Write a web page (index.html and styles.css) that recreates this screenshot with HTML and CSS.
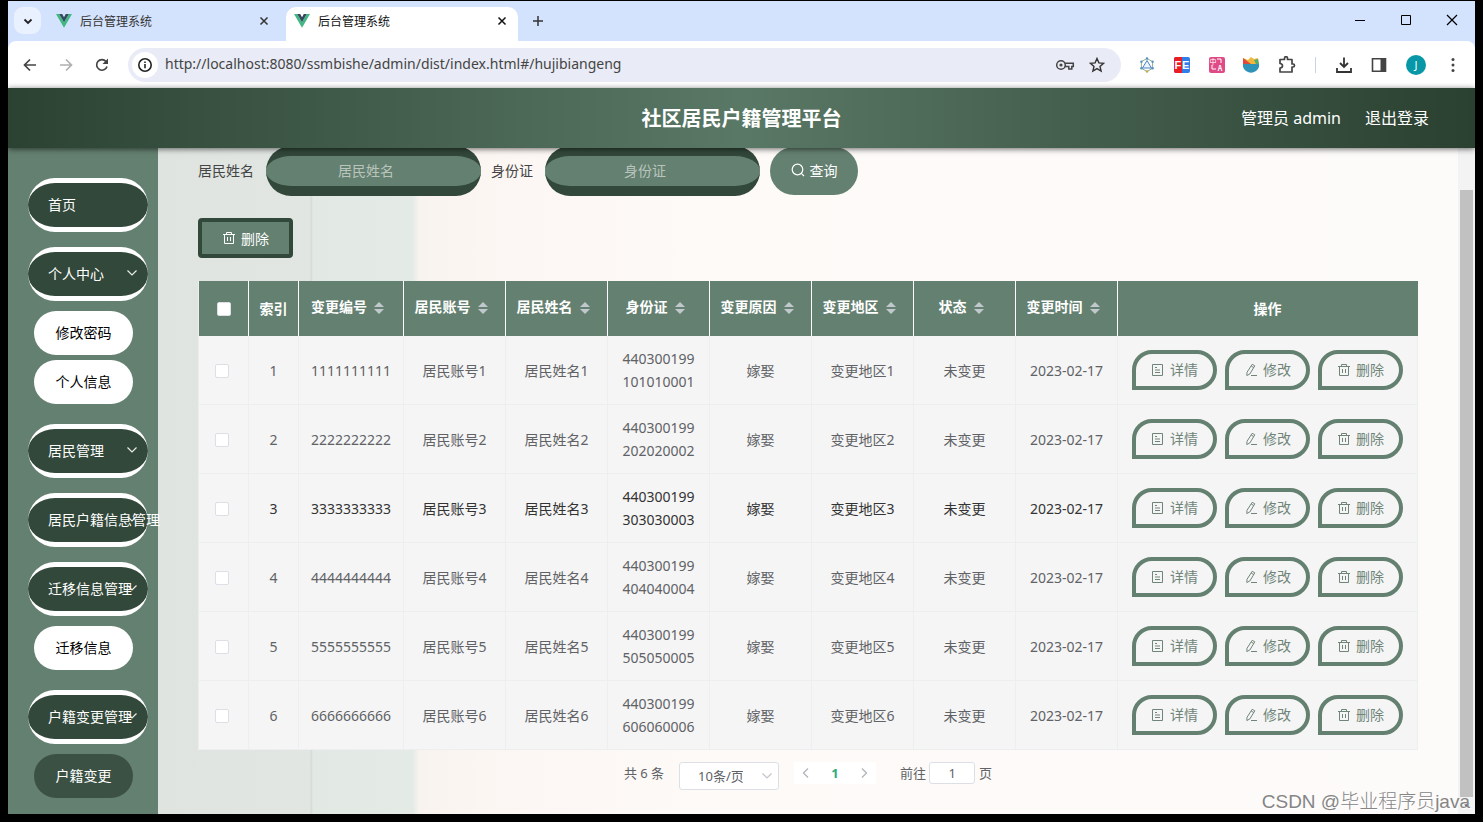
FILE: index.html
```html
<!DOCTYPE html>
<html lang="zh-CN">
<head>
<meta charset="utf-8">
<title>后台管理系统</title>
<link rel="stylesheet" href="styles.css">
</head>
<body>
<svg class="sprite" aria-hidden="true">
  <symbol id="vue" viewBox="0 0 16 14"><path fill="#41b883" d="M0 0h3.2L8 8.300 12.800 0H16L8 13.800z"/><path fill="#35495e" d="M3.200 0h3L8 3.200 9.800 0h3L8 8.300z"/></symbol>
  <symbol id="close" viewBox="0 0 10 10"><path d="M1.500 1.500l7 7M8.500 1.500l-7 7" fill="none" stroke="currentColor" stroke-width="1.500"/></symbol>
  <symbol id="down" viewBox="0 0 12 12"><path d="M1.500 3.500L6 8l4.500-4.500" fill="none" stroke="currentColor" stroke-width="1.200"/></symbol>
  <symbol id="trash" viewBox="0 0 14 14"><path d="M1 3.500h12M4.500 3.500V1.500h5v2M2.500 3.500v9h9v-9M5.500 6v4M8.500 6v4" fill="none" stroke="currentColor"/></symbol>
  <symbol id="doc" viewBox="0 0 14 14"><path d="M1.500 1.500h10v11h-10zM4 4.500h2M4 7h5M4 9.500h5" fill="none" stroke="currentColor"/></symbol>
  <symbol id="edit" viewBox="0 0 14 14"><path d="M8.200 1.300l2.600 1.500-5 8.200-3 1.500.2-3.200zM7.200 3l2.600 1.600M7 12.500h6" fill="none" stroke="currentColor"/></symbol>
</svg>

<div class="window">
  <div class="tabstrip">
    <button class="tab-search" aria-label="搜索标签页"><svg width="12" height="12" viewBox="0 0 12 12"><path d="M2.500 4.500L6 8l3.500-3.500" fill="none" stroke="#222" stroke-width="1.800"/></svg></button>
    <div class="tab"><svg width="16" height="14"><use href="#vue"/></svg><span>后台管理系统</span><button aria-label="关闭"><svg width="10" height="10"><use href="#close"/></svg></button></div>
    <div class="tab active"><svg width="16" height="14"><use href="#vue"/></svg><span>后台管理系统</span><button aria-label="关闭"><svg width="10" height="10"><use href="#close"/></svg></button></div>
    <button class="new-tab" aria-label="新标签页"><svg width="12" height="12" viewBox="0 0 12 12"><path d="M6 1v10M1 6h10" stroke="#333" stroke-width="1.500"/></svg></button>
    <div class="win-controls">
      <button aria-label="最小化"><svg width="12" height="12" viewBox="0 0 12 12"><path d="M1 6.500h10" stroke="#000"/></svg></button>
      <button aria-label="最大化"><svg width="12" height="12" viewBox="0 0 12 12"><path d="M1.500 1.500h9v9h-9z" fill="none" stroke="#000"/></svg></button>
      <button aria-label="关闭窗口"><svg width="12" height="12" viewBox="0 0 12 12"><path d="M1 1l10 10M11 1L1 11" stroke="#000" stroke-width="1.200"/></svg></button>
    </div>
  </div>

  <div class="toolbar">
    <div class="nav-buttons">
      <button aria-label="后退"><svg width="16" height="16" viewBox="0 0 16 16"><path d="M14 8H3M8 2.500L2.500 8 8 13.500" fill="none" stroke="#444" stroke-width="1.700"/></svg></button>
      <button aria-label="前进"><svg width="16" height="16" viewBox="0 0 16 16"><path d="M2 8h11M8 2.500L13.500 8 8 13.500" fill="none" stroke="#b0b0b0" stroke-width="1.700"/></svg></button>
      <button aria-label="刷新"><svg width="16" height="16" viewBox="0 0 16 16"><path d="M13 9.500A5.300 5.300 0 1 1 12 4.500L13 5.600" fill="none" stroke="#444" stroke-width="1.700"/><path d="M14 1.500V7H8.500z" fill="#444"/></svg></button>
    </div>
    <div class="omnibox">
      <span class="info"><svg width="16" height="16" viewBox="0 0 16 16"><circle cx="8" cy="8" r="6.200" fill="none" stroke="#222" stroke-width="1.600"/><path d="M8 7v4.200M8 4.500v1.500" stroke="#222" stroke-width="1.600"/></svg></span>
      <input class="url" aria-label="地址" value="http://localhost:8080/ssmbishe/admin/dist/index.html#/hujibiangeng">
      <svg width="20" height="16" viewBox="0 0 20 16"><circle cx="6" cy="8" r="4.300" fill="none" stroke="#444" stroke-width="1.500"/><circle cx="6" cy="8" r="1.600" fill="#444"/><path d="M9.800 6.300h8.500v3.200h-1.500v2.500h-3V9.600h-4" fill="none" stroke="#444" stroke-width="1.500"/></svg>
      <svg width="16" height="16" viewBox="0 0 16 16"><path d="M8 1.500l1.900 4.400 4.700.4-3.600 3.100 1.100 4.700L8 11.600l-4.100 2.500L5 9.400 1.400 6.300l4.700-.4z" fill="none" stroke="#333" stroke-width="1.400"/></svg>
    </div>
    <div class="extensions">
      <svg width="16" height="16" viewBox="0 0 16 16"><path d="M8 1.500l5.600 3.200v6.600L8 14.500l-5.600-3.200V4.700z" fill="none" stroke="#8fb08c"/><path d="M8 3.500l4.500 7.500h-9z" fill="#eef5fc" stroke="#4b83c3"/><g fill="#5d8fc4"><circle cx="8" cy="1.500" r="1.200"/><circle cx="13.600" cy="4.700" r="1.200"/><circle cx="13.600" cy="11.300" r="1.200"/><circle cx="2.400" cy="4.700" r="1.200"/><circle cx="2.400" cy="11.300" r="1.200"/></g><circle cx="8" cy="14.500" r="1.200" fill="#c6a84d"/></svg>
      <span class="ext-fe"><span>F</span><span>E</span></span>
      <span class="ext-tr"><span>中</span><svg width="6" height="6" viewBox="0 0 6 6"><path d="M0 1h4v4" fill="none" stroke="#fff"/></svg><svg width="6" height="6" viewBox="0 0 6 6"><path d="M2 0v4h4" fill="none" stroke="#fff"/></svg><b>A</b></span>
      <svg width="16" height="16" viewBox="0 0 16 16"><path d="M0 6h16a8 8 0 0 1-3 8q-5 3.500-10 0A8 8 0 0 1 0 6z" fill="#2f93b8"/><path d="M0 7V1l5 2 3-3 3 2 4-1 1 6z" fill="#f3b83b"/><path d="M0 1l8 6H0z" fill="#dd4b3e"/><path d="M11 3l4-1 1 5h-3z" fill="#52ad75"/></svg>
      <svg width="18" height="18" viewBox="0 0 18 18"><path d="M2 3.500h4.500V2.200a1.500 1.500 0 0 1 3 0v1.300H14V8h1a1.500 1.500 0 0 1 0 3h-1v5H2v-4q2.500-.3 2.500-2.300T2 7.500z" fill="none" stroke="#444" stroke-width="1.700" stroke-linejoin="round"/></svg>
      <i class="divider"></i>
      <svg width="18" height="18" viewBox="0 0 18 18"><path d="M9 1.500v9M5 7l4 4 4-4M2 12v4h14v-4" fill="none" stroke="#333" stroke-width="1.800"/></svg>
      <svg width="16" height="16" viewBox="0 0 16 16"><path d="M1.500 1.800h13v12.400h-13z" fill="none" stroke="#444" stroke-width="1.600"/><path d="M9.500 2h5v12h-5z" fill="#444"/></svg>
      <span class="avatar">J</span>
      <svg width="16" height="16" viewBox="0 0 16 16"><g fill="#444"><circle cx="8" cy="2.500" r="1.500"/><circle cx="8" cy="8" r="1.500"/><circle cx="8" cy="13.500" r="1.500"/></g></svg>
    </div>
  </div>

  <header class="app-header">
    <h1>社区居民户籍管理平台</h1>
    <div class="user"><span>管理员 admin</span><a href="#">退出登录</a></div>
  </header>

  <div class="app-body">
    <nav class="sidebar">
      <a class="menu" href="#">首页</a>
      <div class="group">
        <a class="menu" href="#">个人中心<svg width="12" height="12"><use href="#down"/></svg></a>
        <a class="sub" href="#">修改密码</a>
        <a class="sub" href="#">个人信息</a>
      </div>
      <a class="menu" href="#">居民管理<svg width="12" height="12"><use href="#down"/></svg></a>
      <a class="menu" href="#">居民户籍信息管理<svg width="12" height="12"><use href="#down"/></svg></a>
      <div class="group">
        <a class="menu" href="#">迁移信息管理<svg width="12" height="12"><use href="#down"/></svg></a>
        <a class="sub" href="#">迁移信息</a>
      </div>
      <div class="group">
        <a class="menu" href="#">户籍变更管理<svg width="12" height="12"><use href="#down"/></svg></a>
        <a class="sub current" href="#">户籍变更</a>
      </div>
    </nav>

    <main class="content">
      <form class="search">
        <label for="name">居民姓名</label><input id="name" type="text" placeholder="居民姓名">
        <label for="idcard">身份证</label><input id="idcard" type="text" placeholder="身份证">
        <button type="button"><svg width="14" height="14" viewBox="0 0 14 14"><circle cx="6.500" cy="6.500" r="5.300" fill="none" stroke="currentColor" stroke-width="1.200"/><path d="M10.300 10.300l2.700 2.700" stroke="currentColor" stroke-width="1.200"/></svg>查询</button>
      </form>
      <button class="delete-all"><svg width="14" height="14"><use href="#trash"/></svg>删除</button>

      <table>
        <colgroup><col class="c-small"><col class="c-small"><col class="c-code"><col><col><col><col><col><col><col><col class="c-actions"></colgroup>
        <thead><tr>
          <th class="plain"><input type="checkbox" aria-label="全选"></th><th class="plain">索引</th>
          <th>变更编号<i class="sort"></i></th><th>居民账号<i class="sort"></i></th><th>居民姓名<i class="sort"></i></th><th>身份证<i class="sort"></i></th><th>变更原因<i class="sort"></i></th><th>变更地区<i class="sort"></i></th><th>状态<i class="sort"></i></th><th>变更时间<i class="sort"></i></th><th class="plain">操作</th>
        </tr></thead>
        <tbody>
          <tr><td><input type="checkbox" aria-label="选择1"></td><td>1</td><td>1111111111</td><td>居民账号1</td><td>居民姓名1</td><td>440300199<wbr>101010001</td><td>嫁娶</td><td>变更地区1</td><td>未变更</td><td>2023-02-17</td><td><div class="actions"><button><svg width="14" height="14"><use href="#doc"/></svg>详情</button><button><svg width="14" height="14"><use href="#edit"/></svg>修改</button><button><svg width="14" height="14"><use href="#trash"/></svg>删除</button></div></td></tr>
          <tr><td><input type="checkbox" aria-label="选择2"></td><td>2</td><td>2222222222</td><td>居民账号2</td><td>居民姓名2</td><td>440300199<wbr>202020002</td><td>嫁娶</td><td>变更地区2</td><td>未变更</td><td>2023-02-17</td><td><div class="actions"><button><svg width="14" height="14"><use href="#doc"/></svg>详情</button><button><svg width="14" height="14"><use href="#edit"/></svg>修改</button><button><svg width="14" height="14"><use href="#trash"/></svg>删除</button></div></td></tr>
          <tr class="hovered"><td><input type="checkbox" aria-label="选择3"></td><td>3</td><td>3333333333</td><td>居民账号3</td><td>居民姓名3</td><td>440300199<wbr>303030003</td><td>嫁娶</td><td>变更地区3</td><td>未变更</td><td>2023-02-17</td><td><div class="actions"><button><svg width="14" height="14"><use href="#doc"/></svg>详情</button><button><svg width="14" height="14"><use href="#edit"/></svg>修改</button><button><svg width="14" height="14"><use href="#trash"/></svg>删除</button></div></td></tr>
          <tr><td><input type="checkbox" aria-label="选择4"></td><td>4</td><td>4444444444</td><td>居民账号4</td><td>居民姓名4</td><td>440300199<wbr>404040004</td><td>嫁娶</td><td>变更地区4</td><td>未变更</td><td>2023-02-17</td><td><div class="actions"><button><svg width="14" height="14"><use href="#doc"/></svg>详情</button><button><svg width="14" height="14"><use href="#edit"/></svg>修改</button><button><svg width="14" height="14"><use href="#trash"/></svg>删除</button></div></td></tr>
          <tr><td><input type="checkbox" aria-label="选择5"></td><td>5</td><td>5555555555</td><td>居民账号5</td><td>居民姓名5</td><td>440300199<wbr>505050005</td><td>嫁娶</td><td>变更地区5</td><td>未变更</td><td>2023-02-17</td><td><div class="actions"><button><svg width="14" height="14"><use href="#doc"/></svg>详情</button><button><svg width="14" height="14"><use href="#edit"/></svg>修改</button><button><svg width="14" height="14"><use href="#trash"/></svg>删除</button></div></td></tr>
          <tr><td><input type="checkbox" aria-label="选择6"></td><td>6</td><td>6666666666</td><td>居民账号6</td><td>居民姓名6</td><td>440300199<wbr>606060006</td><td>嫁娶</td><td>变更地区6</td><td>未变更</td><td>2023-02-17</td><td><div class="actions"><button><svg width="14" height="14"><use href="#doc"/></svg>详情</button><button><svg width="14" height="14"><use href="#edit"/></svg>修改</button><button><svg width="14" height="14"><use href="#trash"/></svg>删除</button></div></td></tr>
        </tbody>
      </table>

      <div class="pagination">
        <span>共 6 条</span>
        <div class="page-size"><select aria-label="每页条数"><option>10条/页</option></select><svg width="12" height="12"><use href="#down"/></svg></div>
        <div class="pager">
          <button aria-label="上一页"><svg width="12" height="12" viewBox="0 0 12 12"><path d="M8 1.500L3.500 6 8 10.500" fill="none" stroke="currentColor" stroke-width="1.300"/></svg></button>
          <button class="on">1</button>
          <button aria-label="下一页"><svg width="12" height="12" viewBox="0 0 12 12"><path d="M4 1.500L8.500 6 4 10.500" fill="none" stroke="currentColor" stroke-width="1.300"/></svg></button>
        </div>
        <label class="jump">前往<input type="text" value="1">页</label>
      </div>
    </main>
    <div class="scrollbar"><div class="thumb"></div><svg width="7" height="4" viewBox="0 0 7 4"><path d="M0 0h7L3.500 4z" fill="#505050"/></svg></div>
  </div>
  <div class="watermark">CSDN @毕业程序员java</div>
</div>
</body>
</html>
```
FILE: styles.css
```css
* { box-sizing: border-box; }

:root {
  --green: #648070;
  --dark: #32483a;
}

body {
  margin: 0;
  padding: 1px 8px 8px;
  min-height: 100vh;
  display: flex;
  background: #000;
  font: 14px/23px "Noto Sans", "Noto Sans CJK SC", sans-serif;
  color: #606266;
}

button, input, select { font: inherit; color: inherit; }
button { border: 0; padding: 0; background: none; display: flex; align-items: center; justify-content: center; }
a { color: inherit; text-decoration: none; }
svg { flex: none; }
.sprite { display: none; }

.window {
  position: relative;
  flex: 1;
  min-width: 0;
  display: flex;
  flex-direction: column;
  background: #d3e2fd;
}

/* browser tabs */
.tabstrip { display: flex; height: 40px; padding: 6px 0 0 6px; }
.tab-search { width: 27px; height: 27px; border-radius: 9px; background: #eaf1fe; }
.tab {
  display: flex;
  align-items: center;
  width: 232px;
  height: 34px;
  padding: 0 11px 6px 8px;
  margin-left: 7px;
  gap: 8px;
  font-size: 12px;
  color: #333;
}
.tab span { flex: 1; }
.tab.active { margin-left: 6px; background: #fff; border-radius: 10px 10px 0 0; color: #111; }
.new-tab { width: 40px; height: 28px; }
.win-controls { margin-left: auto; display: flex; height: 26px; }
.win-controls button { width: 46px; }

.toolbar {
  display: flex;
  align-items: center;
  height: 47px;
  padding: 0 14px;
  background: #fff;
  border-radius: 8px 8px 0 0;
}
.nav-buttons { display: flex; gap: 20px; }
.omnibox {
  flex: 1;
  display: flex;
  align-items: center;
  gap: 14px;
  height: 34px;
  margin: 0 18px;
  padding: 0 16px 0 4px;
  border-radius: 17px;
  background: #e9ecf6;
}
.info { display: flex; padding: 5px; border-radius: 50%; background: #fff; }
.url { flex: 1; min-width: 0; margin-left: -7px; padding: 0 0 2px; border: 0; background: none; font-size: 14px; color: #444; outline: 0; }
.extensions { display: flex; align-items: center; justify-content: space-between; width: 322px; }
.ext-fe { display: flex; width: 16px; height: 16px; border-radius: 2px; overflow: hidden; font: bold 11px/16px "Liberation Sans", sans-serif; color: #fff; background: #2f7de8; }
.ext-fe span { width: 8px; text-align: center; }
.ext-fe span:first-child { background: #ec1c24; }
.ext-tr { display: grid; grid-template-columns: 7px 7px; place-items: center; width: 16px; height: 16px; padding: 1px; border-radius: 2px; background: #e04a86; color: #fff; font: 7px/7px "Noto Sans CJK SC", sans-serif; }
.divider { width: 1px; height: 16px; background: #c5d3ea; }
.avatar { width: 20px; height: 20px; border-radius: 50%; background: #0797a7; color: #fff; font-size: 11px; line-height: 20px; text-align: center; }

/* application header */
.app-header {
  position: relative;
  z-index: 2;
  display: grid;
  grid-template-columns: 1fr auto 1fr;
  align-items: center;
  height: 60px;
  padding: 0 46px;
  background: linear-gradient(90deg, #2b4232, #5a7866 50%, #2a4030);
  box-shadow: 0 1px 6px rgba(0, 0, 0, .6);
  color: #fff;
}
.app-header h1 { grid-column: 2; margin: 0; font-size: 20px; }
.user { display: flex; justify-content: flex-end; gap: 24px; font-size: 16px; }

.app-body { flex: 1; display: flex; min-height: 0; }

/* sidebar */
.sidebar {
  position: relative;
  z-index: 1;
  flex: none;
  width: 150px;
  padding: 30px 10px 11px 20px;
  display: flex;
  flex-direction: column;
  gap: 15px;
  background: var(--green);
}
.menu {
  position: relative;
  display: flex;
  align-items: center;
  height: 54px;
  padding: 0 0 2px 20px;
  border: solid #fff;
  border-width: 5px 0;
  border-radius: 27px;
  background: var(--dark);
  color: #fff;
  white-space: nowrap;
}
.menu svg { position: absolute; right: 10px; opacity: .9; }
.group { display: flex; flex-direction: column; padding-bottom: 5px; }
.sub {
  width: 99px;
  height: 44px;
  margin: 5px 0 0 6px;
  border-radius: 22px;
  background: #fff;
  color: #000;
  line-height: 44px;
  text-align: center;
}
.menu + .sub { margin-top: 10px; }
.sub.current { background: #3b5144; color: #fff; }

/* page content */
.content {
  flex: 1;
  min-width: 0;
  padding: 0 40px 24px;
  background: linear-gradient(90deg, #dfe4e1 0, #e1e6e2 152px, #d6d8d6 153px, #e2e9e4 155px, #e4ebe6 255px, #f8f3ef 261px, #fcf6f3 330px, #fdfaf8 560px, #fdfbfa 100%);
}
.search { display: flex; align-items: center; margin-top: -2px; color: #444; }
.search label { padding: 0 12px 2px 0; }
.search input {
  width: 215px;
  height: 50px;
  margin-right: 10px;
  padding: 0 30px 2px 15px;
  border: solid var(--dark);
  border-width: 10px 0;
  border-radius: 30px;
  background: var(--green);
  text-align: center;
}
.search input::placeholder { color: #b9c4bd; }
.search button { width: 88px; height: 48px; gap: 5px; padding-bottom: 2px; border-radius: 26px; background: var(--green); color: #fff; }
.delete-all {
  width: 95px;
  height: 40px;
  gap: 5px;
  margin: 22px 0 23px;
  border: 4px solid var(--dark);
  border-radius: 4px;
  background: var(--green);
  color: #fff;
}

table { width: 100%; table-layout: fixed; border-collapse: separate; border-spacing: 0; border-left: 1px solid #eceeed; text-align: center; }
.c-small { width: 50px; }
.c-code { width: 105px; }
.c-actions { width: 300px; }
th { height: 55px; padding: 0 0 4px; background: var(--green); border-right: 1px solid #fff; color: #fff; white-space: nowrap; }
th.plain { padding: 0; }
th:last-child { border-right-color: var(--green); }
td { height: 69px; padding: 0 10px; background: #f5f5f5; border: solid #eceeef; border-width: 0 1px 1px 0; }
td:last-child { padding: 0; }
td:nth-child(3), td:nth-child(10) { padding: 0; }
td:first-child { padding: 2px 13px 0 10px; }
.hovered { color: #333; }
table input {
  appearance: none;
  display: block;
  width: 14px;
  height: 14px;
  margin: 0 auto;
  border: 1px solid #dcdfe6;
  border-radius: 2px;
  background: #fff;
}
.sort { display: inline-grid; gap: 2px; width: 24px; justify-content: center; vertical-align: middle; }
.sort::before, .sort::after { content: ""; border: 5px solid transparent; }
.sort::before { border-top: 0; border-bottom-color: #c0c8cc; }
.sort::after { border-bottom: 0; border-top-color: #c0c8cc; }
.actions { display: flex; justify-content: center; gap: 8px; }
.actions button {
  width: 85px;
  height: 40px;
  gap: 5px;
  padding-bottom: 1px;
  border: 4px solid var(--green);
  border-radius: 20px 20px 20px 0;
  color: #708579;
}

.pagination { display: flex; justify-content: center; align-items: flex-start; padding-top: 12px; font-size: 13px; }
.page-size { position: relative; width: 100px; margin: 0 15px; }
.page-size select { appearance: none; width: 100%; height: 28px; padding: 0 35px 0 18px; border: 1px solid #dcdfe6; border-radius: 3px; background: #fff; display: block; text-align: right; }
.page-size svg { position: absolute; right: 6px; top: 8px; color: #c0c4cc; }
.pager { display: flex; height: 22px; background: #fff; color: #b0b4bc; }
.pager button { width: 24px; }
.pager .on { width: 34px; color: #2cab7d; font-weight: bold; }
.jump { display: flex; margin-left: 24px; }
.jump input { width: 46px; height: 22px; margin: 0 4px 0 3px; padding: 0; border: 1px solid #dcdfe6; border-radius: 3px; background: #fff; text-align: center; }

.scrollbar { width: 17px; padding: 42px 2px 7px; background: #f3f3f3; display: flex; flex-direction: column; align-items: center; gap: 6px; }
.thumb { flex: 1; width: 13px; background: #c1c1c1; }

.watermark {
  position: absolute;
  right: 5px;
  bottom: 0;
  z-index: 3;
  color: #858585;
  font: 300 19px/24px "Liberation Sans", "Noto Sans CJK SC", sans-serif;
  text-shadow: 1px 1px 0 #fff;
}
```
